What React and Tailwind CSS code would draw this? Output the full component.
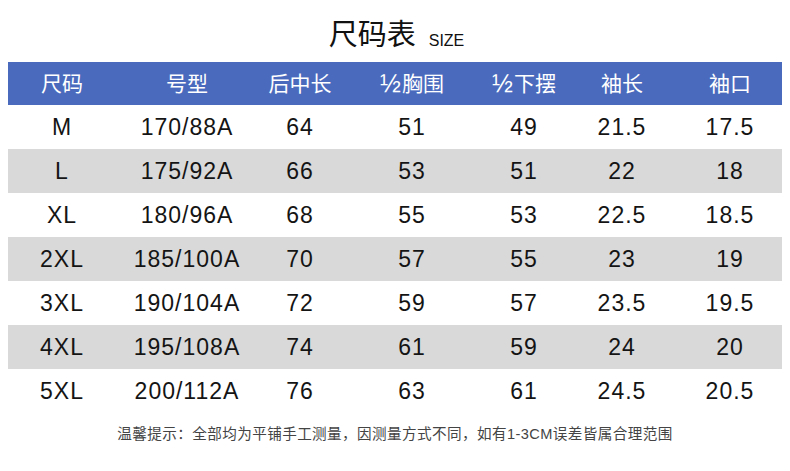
const headers = [
  ['', '尺码'],
  ['', '号型'],
  ['', '后中长'],
  ['½', '胸围'],
  ['½', '下摆'],
  ['', '袖长'],
  ['', '袖口'],
];

const rows = [
  ['M', '170/88A', '64', '51', '49', '21.5', '17.5'],
  ['L', '175/92A', '66', '53', '51', '22', '18'],
  ['XL', '180/96A', '68', '55', '53', '22.5', '18.5'],
  ['2XL', '185/100A', '70', '57', '55', '23', '19'],
  ['3XL', '190/104A', '72', '59', '57', '23.5', '19.5'],
  ['4XL', '195/108A', '74', '61', '59', '24', '20'],
  ['5XL', '200/112A', '76', '63', '61', '24.5', '20.5'],
];

const cols = 'grid grid-cols-[108px_142px_84px_140px_84px_112px_104px]';

export default function App() {
  return (
    <div
      className="w-[790px] h-[471px] bg-white overflow-hidden"
      style={{ fontFamily: '"Liberation Sans", Arial, "Noto Sans CJK SC", sans-serif' }}
    >
      {/* Title */}
      <div className="h-[62px] flex items-end justify-center pb-[12px] pl-[3px]">
        <span className="text-[29px] leading-none text-[#111]">尺码表</span>
        <span className="text-[16px] leading-none text-[#111] ml-[13px] mb-[1px]">SIZE</span>
      </div>

      {/* Table */}
      <div className="mx-[8px] w-[774px]">
        <div className={`${cols} h-[43px] bg-[#4a6bbd] text-white text-[21px]`}>
          {headers.map(([frac, h]) => (
            <div key={h} className="flex items-center justify-center">
              {frac && <span className="text-[25px] leading-none mr-[1px]">{frac}</span>}
              {h}
            </div>
          ))}
        </div>
        {rows.map((r, i) => (
          <div
            key={r[0]}
            className={`${cols} h-[44px] text-[23px] tracking-[1px] text-[#141414] ${i % 2 === 1 ? 'bg-[#d9d9d9]' : 'bg-white'}`}
          >
            {r.map((c, j) => (
              <div key={j} className="flex items-center justify-center">
                {c}
              </div>
            ))}
          </div>
        ))}
      </div>

      {/* Footer note */}
      <div className="mt-[11px] text-center text-[14.6px] tracking-[0.4px] text-[#444]">
        温馨提示：全部均为平铺手工测量，因测量方式不同，如有1-3CM误差皆属合理范围
      </div>
    </div>
  );
}
